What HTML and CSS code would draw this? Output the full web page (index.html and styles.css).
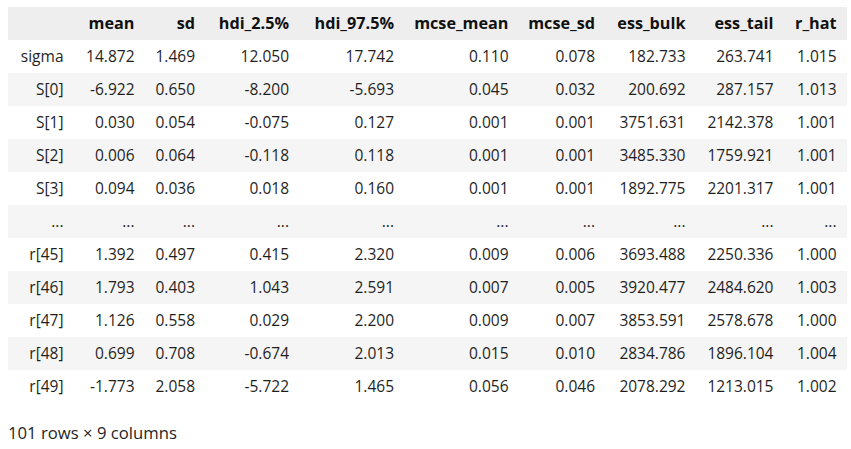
FILE: index.html
```html
<!DOCTYPE html>
<html>
<head>
<meta charset="utf-8">
<link rel="stylesheet" href="styles.css">
</head>
<body>
<div class="output">
<table class="dataframe">
<colgroup>
<col class="c0"><col class="c1"><col class="c2"><col class="c3"><col class="c4"><col class="c5"><col class="c6"><col class="c7"><col class="c8"><col class="c9">
</colgroup>
<thead>
<tr><th></th><th>mean</th><th>sd</th><th>hdi_2.5%</th><th>hdi_97.5%</th><th>mcse_mean</th><th>mcse_sd</th><th>ess_bulk</th><th>ess_tail</th><th>r_hat</th></tr>
</thead>
<tbody>
<tr><th>sigma</th><td>14.872</td><td>1.469</td><td>12.050</td><td>17.742</td><td>0.110</td><td>0.078</td><td>182.733</td><td>263.741</td><td>1.015</td></tr>
<tr><th>S[0]</th><td>-6.922</td><td>0.650</td><td>-8.200</td><td>-5.693</td><td>0.045</td><td>0.032</td><td>200.692</td><td>287.157</td><td>1.013</td></tr>
<tr><th>S[1]</th><td>0.030</td><td>0.054</td><td>-0.075</td><td>0.127</td><td>0.001</td><td>0.001</td><td>3751.631</td><td>2142.378</td><td>1.001</td></tr>
<tr><th>S[2]</th><td>0.006</td><td>0.064</td><td>-0.118</td><td>0.118</td><td>0.001</td><td>0.001</td><td>3485.330</td><td>1759.921</td><td>1.001</td></tr>
<tr><th>S[3]</th><td>0.094</td><td>0.036</td><td>0.018</td><td>0.160</td><td>0.001</td><td>0.001</td><td>1892.775</td><td>2201.317</td><td>1.001</td></tr>
<tr><th>...</th><td>...</td><td>...</td><td>...</td><td>...</td><td>...</td><td>...</td><td>...</td><td>...</td><td>...</td></tr>
<tr><th>r[45]</th><td>1.392</td><td>0.497</td><td>0.415</td><td>2.320</td><td>0.009</td><td>0.006</td><td>3693.488</td><td>2250.336</td><td>1.000</td></tr>
<tr><th>r[46]</th><td>1.793</td><td>0.403</td><td>1.043</td><td>2.591</td><td>0.007</td><td>0.005</td><td>3920.477</td><td>2484.620</td><td>1.003</td></tr>
<tr><th>r[47]</th><td>1.126</td><td>0.558</td><td>0.029</td><td>2.200</td><td>0.009</td><td>0.007</td><td>3853.591</td><td>2578.678</td><td>1.000</td></tr>
<tr><th>r[48]</th><td>0.699</td><td>0.708</td><td>-0.674</td><td>2.013</td><td>0.015</td><td>0.010</td><td>2834.786</td><td>1896.104</td><td>1.004</td></tr>
<tr><th>r[49]</th><td>-1.773</td><td>2.058</td><td>-5.722</td><td>1.465</td><td>0.056</td><td>0.046</td><td>2078.292</td><td>1213.015</td><td>1.002</td></tr>
</tbody>
</table>
<p class="shape">101 rows × 9 columns</p>
</div>
</body>
</html>
```
FILE: styles.css
```css
html, body {
  margin: 0;
  padding: 0;
  background: #ffffff;
}
body {
  font-family: "Open Sans", "Noto Sans", sans-serif;
  color: #1f1f1f;
}
.output {
  padding: 7px 8px 0 8px;
}
.dataframe {
  border-collapse: collapse;
  border-spacing: 0;
  table-layout: fixed;
  width: 838.5px;
  font-size: 15.5px;
}
.c0 { width: 65.5px; }
.c1 { width: 71px; }
.c2 { width: 60.5px; }
.c3 { width: 94px; }
.c4 { width: 105px; }
.c5 { width: 114.5px; }
.c6 { width: 86.5px; }
.c7 { width: 90.5px; }
.c8 { width: 88px; }
.c9 { width: 63px; }
.dataframe th,
.dataframe td {
  padding: 0 10px 0 0;
  height: 33px;
  line-height: 33px;
  text-align: right;
  white-space: nowrap;
  overflow: visible;
}
.dataframe thead th {
  background: #eeeeee;
  font-weight: 700;
  font-size: 16.2px;
  color: #111111;
}
.dataframe tbody th {
  font-weight: 400;
}
.dataframe tbody tr:nth-child(even) {
  background: #f5f5f5;
}
.shape {
  margin: 20px 0 0 0;
  font-size: 16.7px;
  line-height: 20px;
}
```
